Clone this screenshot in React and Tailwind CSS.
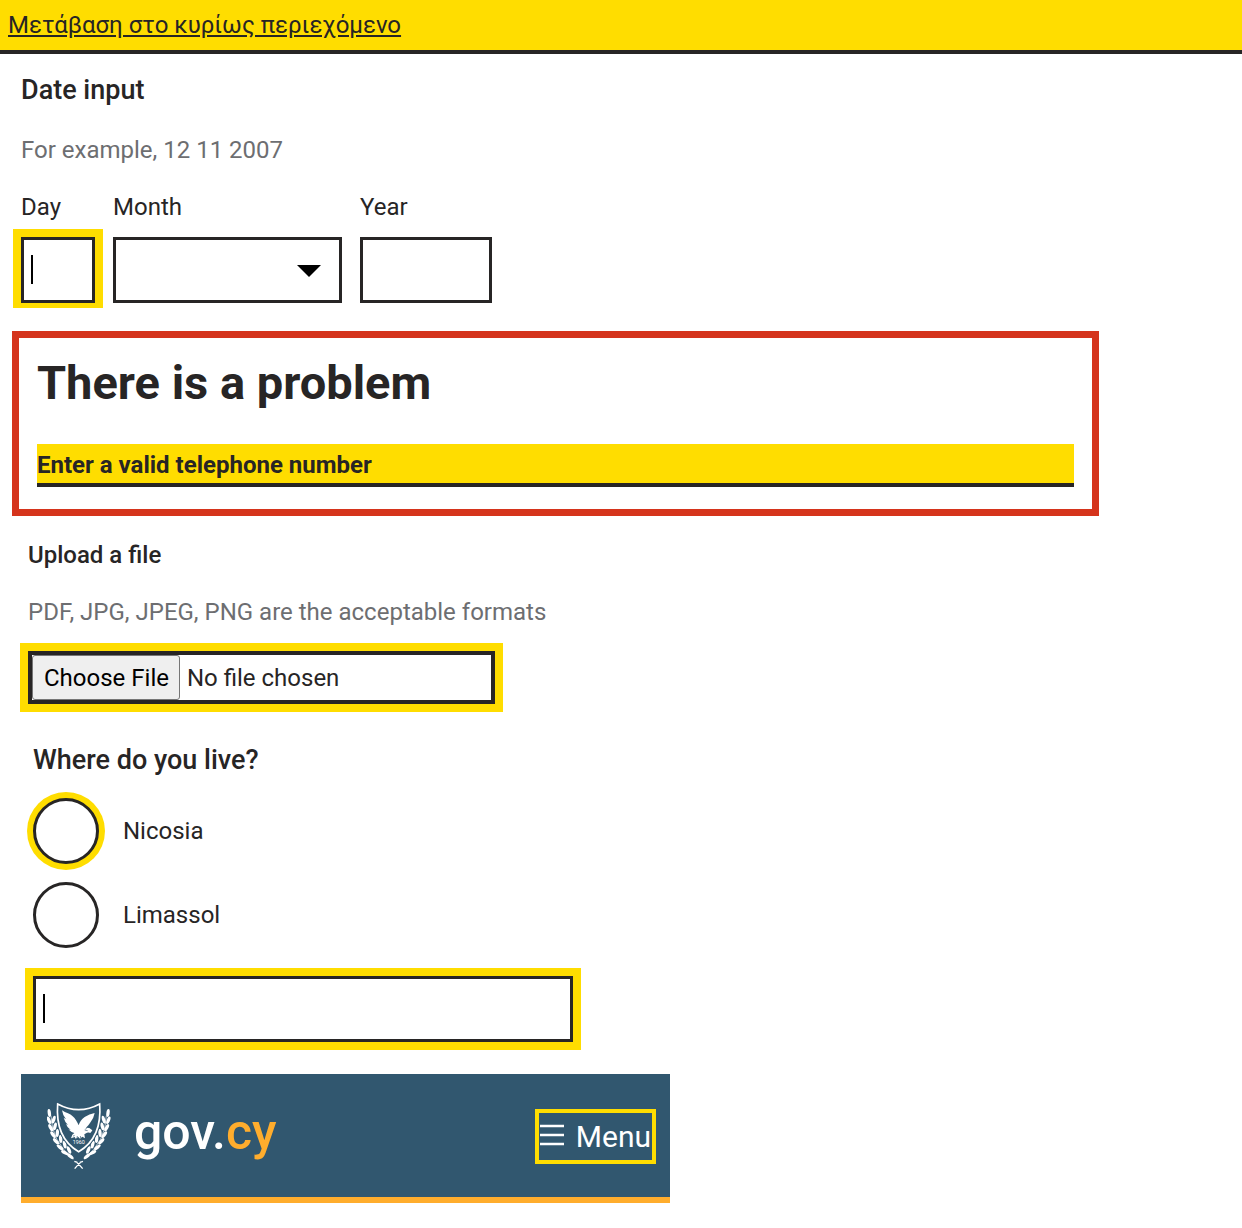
import React from "react";

const leftLeaves = [
  [40, 66, -8],
  [39, 88, -22],
  [53, 86, 18],
  [44, 110, -28],
  [57, 106, 14],
  [51, 131, -36],
  [64, 126, 4],
  [60, 151, -44],
  [74, 144, -6],
  [72, 169, -52],
  [86, 161, -14],
  [86, 185, -60],
  [99, 177, -24],
  [103, 196, -50],
];

function Branch() {
  return (
    <g>
      {leftLeaves.map(([x, y, angle]) => (
        <ellipse
          key={`${x}-${y}`}
          cx={x}
          cy={y}
          rx="5"
          ry="12"
          transform={`rotate(${angle} ${x} ${y})`}
        />
      ))}
      <path
        d="M45 74 Q46 150 112 204"
        fill="none"
        stroke="currentColor"
        strokeWidth="2"
      />
    </g>
  );
}

function Emblem() {
  return (
    <svg
      viewBox="33 33 192 204"
      className="h-[68px] w-16 shrink-0 text-white"
      fill="currentColor"
      aria-hidden="true"
    >
      <Branch />
      <g transform="translate(256 0) scale(-1 1)">
        <Branch />
      </g>
      <path
        d="M65 39 Q96 56 128 56 Q160 56 191 39 Q199 141 128 182 Q57 141 65 39 Z"
        fill="#31576f"
        stroke="#31576f"
        strokeWidth="10"
      />
      <path
        d="M65 39 Q96 56 128 56 Q160 56 191 39 Q199 141 128 182 Q57 141 65 39 Z"
        fill="none"
        stroke="currentColor"
        strokeWidth="5"
      />
      <path d="M78 58 Q86 64 96 67 Q112 74 120 88 Q125 96 128 103 Q132 88 146 78 Q160 69 176 66 Q173 82 164 93 Q158 103 150 110 L160 111 L169 118 L164 125 L153 125 L145 130 L147 142 L139 137 L132 143 L127 138 L119 143 L116 138 L105 142 L109 131 L115 126 Q105 124 97 115 L104 117 Q93 109 90 99 L96 102 Q86 92 83 80 L90 85 Q80 73 78 58 Z" />
      <path
        d="M146 117 L155 119 M152 110 L149 115 M157 124 L153 129 M111 135 L116 134 M123 142 L124 135 M134 141 L133 135"
        fill="none"
        stroke="#31576f"
        strokeWidth="2"
      />
      <text
        x="128"
        y="160"
        textAnchor="middle"
        className="font-['Roboto',sans-serif] text-[16px] font-normal"
      >
        1960
      </text>
      <path
        d="M120 212 Q128 218 140 233 M136 212 Q128 218 116 233 M115 211 L124 214 M141 211 L132 214"
        fill="none"
        stroke="currentColor"
        strokeWidth="4"
      />
    </svg>
  );
}

function Caret() {
  return (
    <span
      aria-hidden="true"
      className="pointer-events-none absolute top-[18px] left-[10px] h-[29px] w-0.5 bg-black"
    />
  );
}

const box =
  "block h-[66px] w-full rounded-none border-3 border-[#272525] bg-white px-2 outline-none";

function DateInput() {
  return (
    <fieldset className="ml-[21px]">
      <legend className="text-[27px] leading-9 font-medium">Date input</legend>
      <p id="date-hint" className="mt-6 text-[#6d6e71]">
        For example, 12 11 2007
      </p>
      <div className="mt-[21px] flex gap-[18px]">
        <div className="w-[74px]">
          <label htmlFor="day">Day</label>
          <div className="-mx-2 mt-1 bg-[#ffdd00] px-2 pt-2 pb-[5px]">
            <div className="relative">
              <input
                id="day"
                type="text"
                inputMode="numeric"
                aria-describedby="date-hint"
                className={box}
              />
              <Caret />
            </div>
          </div>
        </div>
        <div className="w-[229px]">
          <label htmlFor="month">Month</label>
          <div className="relative mt-3">
            <select id="month" defaultValue="" className={`${box} appearance-none`}>
              <option value="" />
            </select>
            <svg
              viewBox="0 0 24 12"
              aria-hidden="true"
              className="pointer-events-none absolute top-7 right-[21px] h-3 w-6"
            >
              <path d="M0 0H24L12 12Z" />
            </svg>
          </div>
        </div>
        <div className="w-[132px]">
          <label htmlFor="year">Year</label>
          <input
            id="year"
            type="text"
            inputMode="numeric"
            className={`${box} mt-3`}
          />
        </div>
      </div>
    </fieldset>
  );
}

function Radio({ id, label, focused }) {
  return (
    <div className="flex items-center gap-6">
      <input
        id={id}
        type="radio"
        name="city"
        className={`size-[66px] shrink-0 appearance-none rounded-full border-3 border-[#272525] bg-white ${
          focused ? "shadow-[0_0_0_6px_#ffdd00]" : ""
        }`}
      />
      <label htmlFor={id}>{label}</label>
    </div>
  );
}

export default function App() {
  return (
    <div className="bg-white pb-6 font-['Roboto',sans-serif] text-2xl leading-9 text-[#272525] [&_label]:block">
      <div className="border-b-4 border-[#272525] bg-[#ffdd00] px-2 py-[7px]">
        <a href="#main" className="underline">
          Μετάβαση στο κυρίως περιεχόμενο
        </a>
      </div>

      <main id="main" className="pt-[18px]">
        <DateInput />

        <section
          role="alert"
          className="mx-3 mt-[23px] max-w-[1087px] border-7 border-[#d5341c] px-[18px] pt-[17px] pb-[22px]"
        >
          <h2 className="text-[47px] leading-14 font-bold">There is a problem</h2>
          <a
            href="#telephone"
            className="mt-[33px] block border-b-4 border-[#272525] bg-[#ffdd00] pt-[3px] font-bold"
          >
            Enter a valid telephone number
          </a>
        </section>

        <section className="mt-[21px] ml-7">
          <label htmlFor="file" className="font-medium">
            Upload a file
          </label>
          <p id="file-hint" className="mt-[21px] text-[#6d6e71]">
            PDF, JPG, JPEG, PNG are the acceptable formats
          </p>
          <input
            id="file"
            type="file"
            aria-describedby="file-hint"
            className="mt-[21px] block w-full max-w-[467px] border-4 border-[#272525] bg-white leading-7 shadow-[0_0_0_8px_#ffdd00] file:mr-[7px] file:h-[45px] file:rounded-[3px] file:border file:border-solid file:border-[#767676] file:bg-[#efefef] file:pr-[10px] file:pl-[11px] file:text-black"
          />
        </section>

        <fieldset className="mt-[38px] ml-[33px]">
          <legend className="text-[27px] leading-9 font-medium">
            Where do you live?
          </legend>
          <div className="mt-5 flex flex-col gap-[18px]">
            <Radio id="nicosia" label="Nicosia" focused />
            <Radio id="limassol" label="Limassol" />
          </div>
        </fieldset>

        <div className="relative mt-7 ml-[33px] max-w-[540px]">
          <input
            id="telephone"
            type="text"
            aria-label="Telephone number"
            className={`${box} shadow-[0_0_0_8px_#ffdd00]`}
          />
          <Caret />
        </div>

        <header className="mt-8 ml-[21px] flex max-w-[649px] items-center justify-between border-b-6 border-[#ffad2d] bg-[#31576f] pt-7 pr-[14px] pb-[27px] pl-[26px] text-white">
          <a href="#home" className="flex items-center gap-[23px]">
            <Emblem />
            <span className="pb-2 text-[50px] leading-14 font-medium">
              gov.<span className="text-[#ffad2d]">cy</span>
            </span>
          </a>
          <button
            type="button"
            className="flex h-[55px] items-center gap-3 border-4 border-[#ffdd00] px-px text-3xl leading-9"
          >
            <svg
              viewBox="0 0 24 24"
              className="size-6 shrink-0"
              fill="none"
              stroke="currentColor"
              strokeWidth="2.5"
              aria-hidden="true"
            >
              <path d="M0 2H24M0 11H24M0 20H24" />
            </svg>
            <span className="pt-0.5">Menu</span>
          </button>
        </header>
      </main>
    </div>
  );
}
